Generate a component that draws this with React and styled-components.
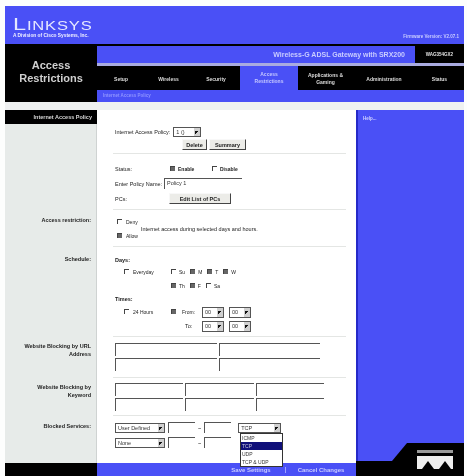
import React from "react";
import styled, { createGlobalStyle } from "styled-components";

const Global = createGlobalStyle`
  html, body { margin: 0; padding: 0; background: #fdfefd; }
  body { font-family: "Liberation Sans", Arial, sans-serif; overflow: hidden; }
`;
const BLUE = "#4a50f6";

const Frame = styled.div`
  width: 459px; height: 470px; margin: 6px 0 0 5px; position: relative;
  display: flex; flex-direction: column; filter: blur(0.7px); font-size: 6px; color: #222;
`;
const Header = styled.header`
  height: 38px; background: ${BLUE}; display: flex; justify-content: space-between; align-items: flex-end;
  padding: 0 5px 4px 8px; box-sizing: border-box; color: #e6e8ff;
`;
const Logo = styled.div`display: flex; flex-direction: column; padding-bottom: 2px;`;
const LogoMark = styled.div`
  font-size: 17px; line-height: 13px; letter-spacing: 0.6px; font-weight: 400; font-variant: small-caps; color: #e6e8ff; transform-origin: left; transform: scaleX(1.38);
`;
const LogoSub = styled.div`font-size: 4.8px; font-weight: 700; line-height: 5px; margin-top: 2px; color: #f0f0ff;`;
const Firmware = styled.div`font-size: 4.5px; font-weight: 700; color: #c9ccff; padding-bottom: 1px;`;
const Nav = styled.nav`height: 58px; display: flex; background: #000;`;
const PageTitle = styled.h1`
  width: 92px; margin: 0; padding-top: 15px; box-sizing: border-box; text-align: center; font-size: 11px; line-height: 13px; font-weight: 700; color: #cfcfcf;
`;
const NavRight = styled.div`flex: 1; display: flex; flex-direction: column;`;
const ProductRow = styled.div`height: 17px; margin-top: 2px; display: flex;`;
const Product = styled.div`
  flex: 1; background: ${BLUE}; color: #c9ccff; font-size: 7px; font-weight: 700; display: flex; align-items: center; justify-content: flex-end; padding-right: 10px;
`;
const Model = styled.div`width: 49px; color: #e4e4e4; font-size: 4.5px; font-weight: 700; display: flex; align-items: center; justify-content: center;`;
const Rule = styled.div`height: 3px; background: #a9abe0; margin-bottom: 2px;`;
const Tabs = styled.div`height: 22px; display: flex; align-items: stretch;`;
const Tab = styled.div`
  width: ${p => p.$w}px; display: flex; align-items: center; justify-content: center; text-align: center; font-size: 5px; line-height: 7px; font-weight: 700;
  color: ${p => p.$active ? "#c5c8ff" : "#dcdcdc"}; background: ${p => p.$active ? BLUE : "#000"};
  ${p => p.$active && "margin-top: -2px;"}
`;
const SubNav = styled.div`height: 12px; background: ${BLUE}; padding-left: 6px; font-size: 4.5px; font-weight: 700; line-height: 11px; color: #8f94ff;`;
const Gap = styled.div`height: 8px; background: #eff1f1;`;
const Body = styled.div`
  flex: 1; min-height: 0; background: #000; display: grid; grid-template-columns: 92px 259px 108px; grid-template-rows: 44px 56px 37px 90px 41px 38px 60px;
`;
const Label = styled.div`
  background: #e7ebe9; border-right: 1px solid #cfd3d2; text-align: right; padding: ${p => p.$top || 0}px 5px 0 0; font-weight: 700; font-size: 5.5px; line-height: 8px; color: #222;
`;
const LabelHead = styled.div`background: #000; color: #d8d8d8; height: 14px; line-height: 14px; text-align: right; margin-right: -6px; padding-right: 5px; font-weight: 700; font-size: 5.5px;`;
const Help = styled.aside`
  grid-column: 3; grid-row: 1 / -1; background: ${BLUE}; border-left: 2px solid #2529c8; color: #d0d2ff; font-size: 4.5px; font-weight: 700; padding: 6px 5px; margin-bottom: 15px;
`;
const Section = styled.section`
  grid-column: 2; background: #fff; padding: ${p => p.$top || 0}px 0 0 18px; min-width: 0; display: flex; flex-direction: column; gap: ${p => p.$gap || 0}px; position: relative;
  &::after { content: ""; position: absolute; left: 16px; right: 10px; bottom: 0; height: 1px; background: ${p => p.$last ? "transparent" : "#e4e6e4"}; }
`;
const Row = styled.div`
  display: flex; align-items: center; gap: ${p => p.$gap || 0}px; height: ${p => p.$h || 14}px; padding-left: ${p => p.$indent || 0}px; font-size: 5.5px; white-space: nowrap;
`;
const Field = styled.span`width: ${p => p.$w}px; flex: none;`;
const Strong = styled.b`font-weight: 700; font-size: 5.5px;`;
const Select = styled.div`
  width: ${p => p.$w}px; height: ${p => p.$h || 10}px; box-sizing: border-box; flex: none; display: flex; align-items: center; justify-content: space-between;
  border: 1px solid #555; padding-left: 2px; background: #fff; font-size: 5.5px; color: #333; margin-left: ${p => p.$ml || 0}px;
  &::after { content: ""; width: 6px; height: 100%; background-color: #d0d0d0; background-image: linear-gradient(135deg, #111 50%, transparent 50%); background-size: 4px 4px; background-position: 1px 3px; background-repeat: no-repeat; }
`;
const Button = styled.div`
  width: ${p => p.$w}px; height: 11px; box-sizing: border-box; flex: none; display: flex; align-items: center; justify-content: center; background: #ecece8; font-size: 5.5px; color: #222; font-weight: 700;
  border: 1px solid #f8f8f8; border-right-color: #444; border-bottom-color: #444;
`;
const Check = styled.span`
  width: 5px; height: 5px; box-sizing: border-box; flex: none; border-top: 1px solid #444; border-left: 1px solid #444; background: ${p => p.$on ? "#666" : "#fff"}; margin-top: -2px;
`;
const Opt = styled.span`display: inline-flex; align-items: center; gap: ${p => p.$gap || 3}px; width: ${p => p.$w ? p.$w + "px" : "auto"}; font-size: 5px; color: #222; ${p => p.$bold && "font-weight:700;"}`;
const TextInput = styled.div`
  width: ${p => p.$w}px; height: ${p => p.$h || 13}px; box-sizing: border-box; flex: none; border-top: 1px solid #555; border-left: 1px solid #555; background: #fff; font-size: 5.5px; padding-left: 2px; line-height: 9px; color: #333;
`;
const InputGrid = styled.div`display: flex; gap: 2px; height: ${p => p.$h}px;`;
const AccessBlock = styled.div`display: flex; align-items: center; gap: 3px; padding-left: 2px; height: 30px; white-space: nowrap; font-size: 5.5px;`;
const Stack = styled.div`display: flex; flex-direction: column; gap: 8px;`;
const Days = styled.div`display: flex; gap: 5px;`;
const Dropdown = styled.div`
  position: absolute; left: 143px; top: 17px; width: 43px; background: #fff; border: 1px solid #333; box-sizing: border-box; font-size: 5px; line-height: 8px; color: #333; z-index: 3;
`;
const DropItem = styled.div`padding-left: 1px; ${p => p.$on && "background: #10107a; color: #ccd;"}`;
const Footer = styled.footer`
  position: absolute; left: 0; right: 0; bottom: 0; height: 13px; display: flex; background: #000; font-size: 6px; font-weight: 700;
`;
const FootLeft = styled.div`width: 92px;`;
const FootMid = styled.div`width: 259px; background: ${BLUE}; display: flex; align-items: center; justify-content: flex-end; color: #c9ccff;`;
const FootBtn = styled.span`width: ${p => p.$w}px; text-align: center; ${p => p.$sep && "border-left:1px solid #9ea2ff;"}`;
const Slope = styled.svg`position: absolute; right: 0; bottom: 0; width: 72px; height: 33px; z-index: 1;`;

const Hours = () => (<><Select $w={22} $h={11}>00</Select><Select $w={22} $h={11}>00</Select></>);
const Day = ({ on, children }) => <Opt $gap={3}><Check $on={on} />{children}</Opt>;

export default function App() {
  return (
    <>
      <Global />
      <Frame>
        <Header>
          <Logo>
            <LogoMark>Linksys</LogoMark>
            <LogoSub>A Division of Cisco Systems, Inc.</LogoSub>
          </Logo>
          <Firmware>Firmware Version: V2.07.1</Firmware>
        </Header>
        <Nav>
          <PageTitle>Access<br />Restrictions</PageTitle>
          <NavRight>
            <ProductRow>
              <Product>Wireless-G ADSL Gateway with SRX200</Product>
              <Model>WAG354GX2</Model>
            </ProductRow>
            <Rule />
            <Tabs>
              <Tab $w={48}>Setup</Tab>
              <Tab $w={47}>Wireless</Tab>
              <Tab $w={48}>Security</Tab>
              <Tab $w={58} $active>Access<br />Restrictions</Tab>
              <Tab $w={55}>Applications &amp;<br />Gaming</Tab>
              <Tab $w={62}>Administration</Tab>
              <Tab $w={49}>Status</Tab>
            </Tabs>
            <SubNav>Internet Access Policy</SubNav>
          </NavRight>
        </Nav>
        <Gap />
        <Body>
          <Help>Help...</Help>
          <Label><LabelHead>Internet Access Policy</LabelHead></Label>
          <Section $top={15}>
            <Row $h={13} $gap={3}>Internet Access Policy: <Select $w={28}>1 ()</Select></Row>
            <Row $h={13} $indent={67} $gap={2}><Button $w={25}>Delete</Button><Button $w={37}>Summary</Button></Row>
          </Section>
          <Label />
          <Section $top={8}>
            <Row $h={14}><Field $w={55}>Status:</Field><Opt $w={42} $bold><Check $on />Enable</Opt><Opt $bold><Check />Disable</Opt></Row>
            <Row $h={15} $gap={2}>Enter Policy Name: <TextInput $w={78} $h={11}>Policy 1</TextInput></Row>
            <Row $h={15}><Field $w={54}>PCs:</Field><Button $w={62}>Edit List of PCs</Button></Row>
          </Section>
          <Label $top={6}>Access restriction:</Label>
          <Section $top={4}>
            <AccessBlock>
              <Stack>
                <Opt $gap={4}><Check />Deny</Opt>
                <Opt $gap={4}><Check $on />Allow</Opt>
              </Stack>
              <span>Internet access during selected days and hours.</span>
            </AccessBlock>
          </Section>
          <Label $top={8}>Schedule:</Label>
          <Section $top={7}>
            <Row $h={11}><Strong>Days:</Strong></Row>
            <Row $h={14} $indent={9}>
              <Field $w={47}><Opt $gap={4}><Check />Everyday</Opt></Field>
              <Days><Day>Su</Day><Day on>M</Day><Day on>T</Day><Day on>W</Day></Days>
            </Row>
            <Row $h={14} $indent={56}>
              <Days><Day on>Th</Day><Day on>F</Day><Day>Sa</Day></Days>
            </Row>
            <Row $h={12}><Strong>Times:</Strong></Row>
            <Row $h={14} $indent={9}>
              <Field $w={47}><Opt $gap={4}><Check />24 Hours</Opt></Field>
              <Opt $w={31} $gap={6}><Check $on />From:</Opt>
              <Row $h={14} $gap={5}><Hours /></Row>
            </Row>
            <Row $h={14} $indent={70}>
              <Field $w={17}>To:</Field>
              <Row $h={14} $gap={5}><Hours /></Row>
            </Row>
          </Section>
          <Label $top={5}>Website Blocking by URL<br />Address</Label>
          <Section $top={6}>
            <InputGrid $h={15}><TextInput $w={102} /><TextInput $w={101} /></InputGrid>
            <InputGrid $h={15}><TextInput $w={102} /><TextInput $w={101} /></InputGrid>
          </Section>
          <Label $top={5}>Website Blocking by<br />Keyword</Label>
          <Section $top={5} $gap={1}>
            <InputGrid $h={14}><TextInput $w={68} /><TextInput $w={69} /><TextInput $w={68} /></InputGrid>
            <InputGrid $h={14}><TextInput $w={68} /><TextInput $w={69} /><TextInput $w={68} /></InputGrid>
          </Section>
          <Label $top={6}>Blocked Services:</Label>
          <Section $top={4} $last>
            <Row $h={15} $gap={3}><Select $w={50}>User Defined</Select><TextInput $w={27} $h={11} /><span>~</span><TextInput $w={27} $h={11} /><Select $w={43} $ml={4}>TCP</Select></Row>
            <Row $h={15} $gap={3}><Select $w={50}>None</Select><TextInput $w={27} $h={11} /><span>~</span><TextInput $w={27} $h={11} /></Row>
            <Dropdown>
              <DropItem>ICMP</DropItem>
              <DropItem $on>TCP</DropItem>
              <DropItem>UDP</DropItem>
              <DropItem>TCP &amp; UDP</DropItem>
            </Dropdown>
          </Section>
        </Body>
        <Footer>
          <FootLeft />
          <FootMid>
            <FootBtn $w={68}>Save Settings</FootBtn>
            <FootBtn $w={70} $sep>Cancel Changes</FootBtn>
          </FootMid>
        </Footer>
        <Slope viewBox="0 0 72 33">
          <path d="M0 33 L0 18 L15 0 L72 0 L72 33 Z" fill="#000" />
          <rect x="25" y="7" width="36" height="3" fill="#999" />
          <path d="M25 26 L25 13 L61 13 L61 26 L59 26 L53 18 L47 26 L42 26 L36 18 L30 26 Z" fill="#eee" />
        </Slope>
      </Frame>
    </>
  );
}
